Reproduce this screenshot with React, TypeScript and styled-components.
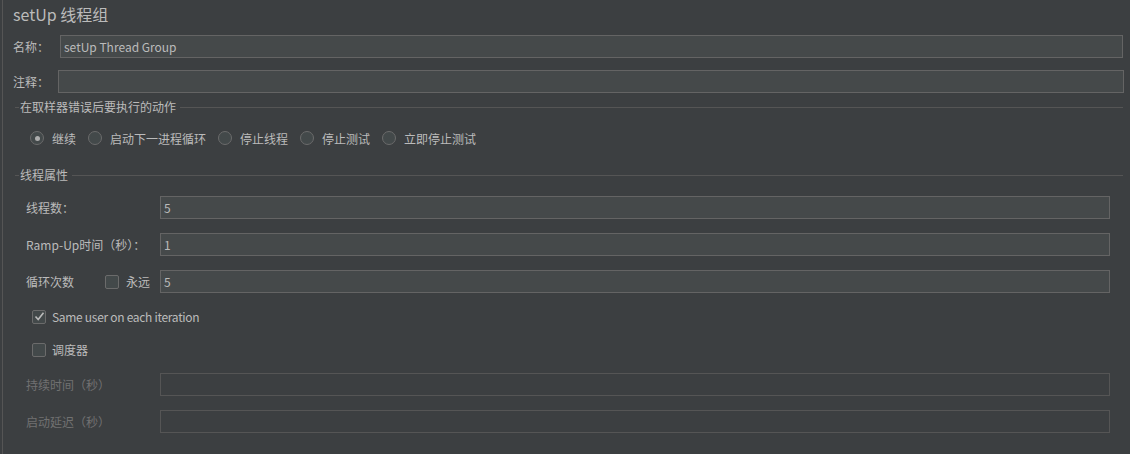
import styled, { createGlobalStyle } from "styled-components";

const GlobalStyle = createGlobalStyle`
    html, body {
        margin: 0;
        padding: 0;
        background: #3c3f41;
    }
    body {
        font-family: "Noto Sans CJK SC", "Noto Sans", sans-serif;
        font-size: 12px;
        color: #bbbbbb;
    }
`;

const actions = ["继续", "启动下一进程循环", "停止线程", "停止测试", "立即停止测试"];

export default function App() {
    return (
        <>
            <GlobalStyle />
            <Page>
                <Title>setUp 线程组</Title>
                <TopRow>
                    <TopLabel $width={47}>名称：</TopLabel>
                    <Field $right={7} value="setUp Thread Group" readOnly />
                </TopRow>
                <TopRow $top={12}>
                    <TopLabel $width={45}>注释：</TopLabel>
                    <Field $right={6} value="" readOnly />
                </TopRow>

                <SectionHeader $top={7}>
                    <Lead />
                    <span>在取样器错误后要执行的动作</span>
                    <Rule />
                </SectionHeader>
                <RadioRow>
                    {actions.map((a, i) => (
                        <RadioItem key={a}>
                            <Radio $checked={i === 0} />
                            <span>{a}</span>
                        </RadioItem>
                    ))}
                </RadioRow>

                <SectionHeader $top={20}>
                    <Lead />
                    <span>线程属性</span>
                    <Rule />
                </SectionHeader>

                <PropRow $top={14}>
                    <PropLabel>线程数：</PropLabel>
                    <Field $right={20} value="5" readOnly />
                </PropRow>
                <PropRow $top={14}>
                    <PropLabel>Ramp-Up时间（秒）：</PropLabel>
                    <Field $right={20} value="1" readOnly />
                </PropRow>
                <PropRow $top={14}>
                    <LoopLabel>循环次数</LoopLabel>
                    <Forever>
                        <Box />
                        <span>永远</span>
                    </Forever>
                    <Field $right={20} value="5" readOnly />
                </PropRow>

                <CheckRow $top={13}>
                    <Box>
                        <svg width="11" height="11" viewBox="0 0 11 11">
                            <polyline
                                points="1.5,5.5 4.2,8.5 9.5,1.8"
                                fill="none"
                                stroke="#bbbbbb"
                                strokeWidth="1.6"
                            />
                        </svg>
                    </Box>
                    <NarrowText>Same user on each iteration</NarrowText>
                </CheckRow>
                <CheckRow $top={12}>
                    <Box />
                    <span>调度器</span>
                </CheckRow>

                <PropRow $top={13}>
                    <PropLabel $disabled>持续时间（秒）</PropLabel>
                    <Field $right={20} $disabled value="" readOnly />
                </PropRow>
                <PropRow $top={14}>
                    <PropLabel $disabled>启动延迟（秒）</PropLabel>
                    <Field $right={20} $disabled value="" readOnly />
                </PropRow>
            </Page>
        </>
    );
}

const Page = styled.div`
    margin-left: 2px;
    border-left: 1px solid #555555;
    height: 454px;
    box-sizing: border-box;
    display: flex;
    flex-direction: column;
`;

const Title = styled.div`
    height: 35px;
    line-height: 28px;
    padding-left: 10px;
    font-size: 16px;
`;

const TopRow = styled.div<{ $top?: number }>`
    display: flex;
    align-items: center;
    height: 23px;
    margin-top: ${(p) => p.$top ?? 0}px;
    padding-left: 10px;
`;

const TopLabel = styled.div<{ $width: number }>`
    width: ${(p) => p.$width}px;
    flex-shrink: 0;
`;

const Field = styled.input<{ $right: number; $disabled?: boolean }>`
    flex: 1;
    min-width: 0;
    height: 23px;
    box-sizing: border-box;
    margin: 0 ${(p) => p.$right}px 0 0;
    padding: 0 3px;
    border: 1px solid ${(p) => (p.$disabled ? "#555555" : "#646464")};
    background: ${(p) => (p.$disabled ? "#3c3f41" : "#45494a")};
    color: #bbbbbb;
    font-family: "Noto Sans CJK SC", "Noto Sans", sans-serif;
    font-size: 12px;
    outline: none;
`;

const SectionHeader = styled.div<{ $top: number }>`
    display: flex;
    align-items: center;
    height: 14px;
    margin-top: ${(p) => p.$top}px;
    padding-left: 12px;
    margin-right: 7px;
    gap: 1px;
    line-height: 14px;
`;

const Lead = styled.div`
    width: 4px;
    height: 1px;
    background: #555555;
`;

const Rule = styled.div`
    flex: 1;
    height: 1px;
    margin-left: 3px;
    background: #555555;
`;

const RadioRow = styled.div`
    display: flex;
    align-items: center;
    gap: 12px;
    height: 20px;
    margin-top: 14px;
    padding-left: 27px;
`;

const RadioItem = styled.label`
    display: flex;
    align-items: center;
    gap: 8px;
`;

const Radio = styled.span<{ $checked?: boolean }>`
    width: 14px;
    height: 14px;
    box-sizing: border-box;
    border-radius: 50%;
    border: 1px solid #6b6b6b;
    background: #43494a;
    display: flex;
    align-items: center;
    justify-content: center;
    &::after {
        content: "";
        width: 5px;
        height: 5px;
        border-radius: 50%;
        background: ${(p) => (p.$checked ? "#adadad" : "transparent")};
    }
`;

const PropRow = styled.div<{ $top: number }>`
    display: flex;
    align-items: center;
    height: 23px;
    margin-top: ${(p) => p.$top}px;
    padding-left: 23px;
`;

const PropLabel = styled.div<{ $disabled?: boolean }>`
    width: 134px;
    flex-shrink: 0;
    color: ${(p) => (p.$disabled ? "#717171" : "#bbbbbb")};
`;

const LoopLabel = styled.div`
    width: 79px;
    flex-shrink: 0;
`;

const Forever = styled.label`
    display: flex;
    align-items: center;
    gap: 7px;
    width: 55px;
    flex-shrink: 0;
`;

const Box = styled.span`
    width: 14px;
    height: 14px;
    box-sizing: border-box;
    border: 1px solid #6b6b6b;
    border-radius: 2px;
    background: #43494a;
    display: flex;
    align-items: center;
    justify-content: center;
    flex-shrink: 0;
`;

const CheckRow = styled.label<{ $top: number }>`
    display: flex;
    align-items: center;
    gap: 6px;
    height: 21px;
    margin-top: ${(p) => p.$top}px;
    padding-left: 29px;
`;

const NarrowText = styled.span`
    letter-spacing: -0.3px;
`;
